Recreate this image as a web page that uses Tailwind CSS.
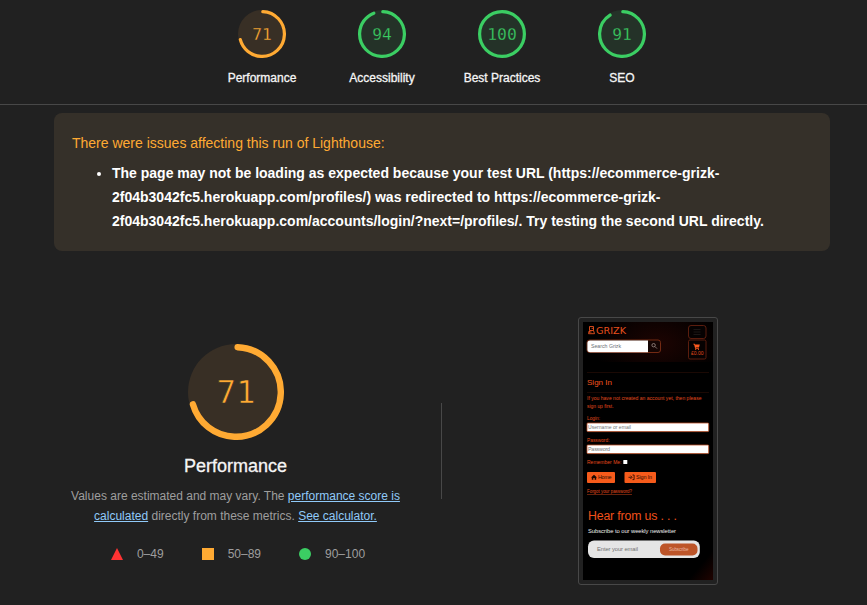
<!DOCTYPE html>
<html lang="en">
<head>
<meta charset="utf-8">
<title>Lighthouse Report</title>
<script src="https://cdn.jsdelivr.net/npm/@tailwindcss/browser@4"></script>
</head>
<body class="h-[605px] w-[867px] overflow-hidden bg-[#212121] font-['Liberation_Sans',Arial,sans-serif] text-[#f5f5f5]">
<header class="flex h-[105px] justify-center border-b border-[#484848] pt-[10px] pl-[17px]">
  <div class="flex w-[120px] flex-col items-center">
    <svg class="h-12 w-12" viewBox="0 0 120 120"><circle cx="60" cy="60" r="60" fill="#382f25"/><circle cx="60" cy="60" r="56" fill="none" stroke="#fa3" stroke-width="8" stroke-linecap="round" stroke-dasharray="245.8 352" transform="rotate(-87.9 60 60)"/><text x="35.5" y="75.5" textLength="49" lengthAdjust="spacingAndGlyphs" font-family="DejaVu Sans Mono, monospace" font-size="41" fill="#fa3" stroke="#382f25" stroke-width=".7">71</text></svg>
    <div class="mt-[12px] text-[12px] leading-[16px] [-webkit-text-stroke:0.3px_#f5f5f5]">Performance</div>
  </div>
  <div class="flex w-[120px] flex-col items-center">
    <svg class="h-12 w-12" viewBox="0 0 120 120"><circle cx="60" cy="60" r="60" fill="#243228"/><circle cx="60" cy="60" r="56" fill="none" stroke="#3bce63" stroke-width="8" stroke-linecap="round" stroke-dasharray="326.7 352" transform="rotate(-87.9 60 60)"/><text x="35.5" y="75.5" textLength="49" lengthAdjust="spacingAndGlyphs" font-family="DejaVu Sans Mono, monospace" font-size="41" fill="#3bce63" stroke="#243228" stroke-width=".7">94</text></svg>
    <div class="mt-[12px] text-[12px] leading-[16px] [-webkit-text-stroke:0.3px_#f5f5f5]">Accessibility</div>
  </div>
  <div class="flex w-[120px] flex-col items-center">
    <svg class="h-12 w-12" viewBox="0 0 120 120"><circle cx="60" cy="60" r="60" fill="#243228"/><circle cx="60" cy="60" r="56" fill="none" stroke="#3bce63" stroke-width="8"/><text x="23" y="75.5" textLength="74" lengthAdjust="spacingAndGlyphs" font-family="DejaVu Sans Mono, monospace" font-size="41" fill="#3bce63" stroke="#243228" stroke-width=".7">100</text></svg>
    <div class="mt-[12px] text-[12px] leading-[16px] [-webkit-text-stroke:0.3px_#f5f5f5]">Best Practices</div>
  </div>
  <div class="flex w-[120px] flex-col items-center">
    <svg class="h-12 w-12" viewBox="0 0 120 120"><circle cx="60" cy="60" r="60" fill="#243228"/><circle cx="60" cy="60" r="56" fill="none" stroke="#3bce63" stroke-width="8" stroke-linecap="round" stroke-dasharray="316.2 352" transform="rotate(-87.9 60 60)"/><text x="35.5" y="75.5" textLength="49" lengthAdjust="spacingAndGlyphs" font-family="DejaVu Sans Mono, monospace" font-size="41" fill="#3bce63" stroke="#243228" stroke-width=".7">91</text></svg>
    <div class="mt-[12px] text-[12px] leading-[16px] [-webkit-text-stroke:0.3px_#f5f5f5]">SEO</div>
  </div>
</header>

<section class="mt-2 ml-[54px] h-[138px] w-[776px] rounded-lg bg-[#353029] p-[18px] text-[14px] leading-6">
  <p class="text-[#fa3]">There were issues affecting this run of Lighthouse:</p>
  <ul class="mt-[6px] list-disc pl-10 font-bold text-white">
    <li>The page may not be loading as expected because your test URL (https://ecommerce-grizk-<br>2f04b3042fc5.herokuapp.com/profiles/) was redirected to https://ecommerce-grizk-<br>2f04b3042fc5.herokuapp.com/accounts/login/?next=/profiles/. Try testing the second URL directly.</li>
  </ul>
</section>

<main class="mt-[66px] ml-[30px] flex">
  <section class="flex w-[411px] flex-col items-center pt-[27px]">
    <svg class="h-24 w-24" viewBox="0 0 120 120"><circle cx="60" cy="60" r="60" fill="#382f25"/><circle cx="60" cy="60" r="56" fill="none" stroke="#fa3" stroke-width="8" stroke-linecap="round" stroke-dasharray="245.8 352" transform="rotate(-87.9 60 60)"/><text x="35.5" y="74" textLength="49" lengthAdjust="spacingAndGlyphs" font-family="DejaVu Sans Mono, monospace" font-size="39" fill="#fa3" stroke="#382f25" stroke-width=".8">71</text></svg>
    <h1 class="mt-[14px] text-[18px] leading-6 [-webkit-text-stroke:0.3px_#f5f5f5]">Performance</h1>
    <p class="mt-[8px] text-center text-[12px] leading-5 text-[#9e9e9e]">Values are estimated and may vary. The <a class="text-[#90caf9] underline">performance score is</a><br><a class="text-[#90caf9] underline">calculated</a> directly from these metrics. <a class="text-[#90caf9] underline">See calculator.</a></p>
    <div class="mt-[18px] flex items-center gap-[38px] pl-[5px] text-[12px] leading-5 text-[#9e9e9e]">
      <span class="flex items-center gap-[14px]"><svg class="h-3 w-3" viewBox="0 0 12 12"><path d="M6 0 12 12H0Z" fill="#f33"/></svg>0–49</span>
      <span class="flex items-center gap-[14px]"><span class="h-3 w-3 bg-[#fa3]"></span>50–89</span>
      <span class="flex items-center gap-[14px]"><span class="h-3 w-3 rounded-full bg-[#3bce63]"></span>90–100</span>
    </div>
  </section>
  <div class="mt-[86px] h-24 w-px bg-[#484848]"></div>
  <div class="ml-[136px] h-[268px] w-[140px] rounded-[3px] border border-[#484848] p-1">
    <svg class="h-[258px] w-[130px]" viewBox="0 0 130 258" font-family="Liberation Sans, Arial, sans-serif">
      <defs>
        <radialGradient id="glow"><stop offset="0" stop-color="#1d0402"/><stop offset="1" stop-color="#1d0402" stop-opacity="0"/></radialGradient>
        <linearGradient id="corner" x1="0" y1="0" x2="1" y2="1"><stop offset=".5" stop-color="#000"/><stop offset="1" stop-color="#200300"/></linearGradient>
      </defs>
      <rect width="130" height="258" fill="#000"/>
      <ellipse cx="75" cy="22" rx="65" ry="42" fill="url(#glow)"/>
      <rect y="40" width="130" height="26" fill="#000"/>
      <rect x="105" y="228" width="25" height="30" fill="url(#corner)"/>
      <g fill="none" stroke="#e8501e" stroke-width=".9"><path d="M6.5 4.5H10.5V8.5H6.5ZM7 8.5 5.5 11.7H11.5L10.5 8.5M5 10H8.5M8.5 6.3h2"/></g>
      <text x="13" y="11.8" textLength="30" lengthAdjust="spacingAndGlyphs" font-family="DejaVu Sans, sans-serif" font-size="9.4" fill="#e8501e">GRIZK</text>
      <rect x="4" y="18" width="73.5" height="12.5" rx="2.5" fill="#140503" stroke="#8c3518" stroke-width=".8"/>
      <path d="M7 18.4H65V30.2H7Q4.4 30.2 4.4 27.8V21Q4.4 18.4 7 18.4Z" fill="#fff"/>
      <text x="8" y="26" textLength="30" font-size="5.2" fill="#6b7077">Search Grizk</text>
      <g fill="none" stroke="#b0a09a" stroke-width=".7"><circle cx="70.6" cy="23.2" r="1.7"/><path d="m72 24.6 2 2"/></g>
      <g fill="#060202" stroke="#702412" stroke-width=".8"><rect x="105.5" y="3.5" width="17.5" height="13" rx="2.5"/><rect x="105.5" y="18" width="17.5" height="19" rx="1.5"/></g>
      <path d="M110.5 7.5h7M110.5 10h7M110.5 12.5h7" stroke="#25201e" stroke-width=".7"/>
      <path d="M110.3 21.8h1.5l.3.6h4.7l-.8 3.2h-3.3l.2.5h3v.7h-3.7l-1.1-4.3H110.3Z" fill="#ff5a1f"/><circle cx="112.7" cy="27.3" r=".6" fill="#ff5a1f"/><circle cx="115.5" cy="27.3" r=".6" fill="#ff5a1f"/>
      <text x="108" y="32.5" textLength="12.5" lengthAdjust="spacingAndGlyphs" font-size="5" fill="#e04a1c">£0.00</text>
      <path d="M4 50.5H126M4 70.5H126" stroke="#260d06" stroke-width=".7"/>
      <text x="4" y="62.7" textLength="25" font-size="8" fill="#f0541f">Sign In</text>
      <g font-size="5.2" fill="#e04a1c">
        <text x="4" y="78" textLength="114.5" lengthAdjust="spacingAndGlyphs">If you have not created an account yet, then please</text>
        <text x="4" y="85.5" textLength="26.5" lengthAdjust="spacingAndGlyphs">sign up first.</text>
        <text x="4" y="98" textLength="13" lengthAdjust="spacingAndGlyphs">Login:</text>
        <text x="4" y="120" textLength="22.5" lengthAdjust="spacingAndGlyphs">Password:</text>
        <text x="4" y="142" textLength="34.5" lengthAdjust="spacingAndGlyphs">Remember Me:</text>
        <text x="4" y="171" textLength="45" lengthAdjust="spacingAndGlyphs" font-size="4.6" text-decoration="underline">Forgot your password?</text>
      </g>
      <g fill="#fff" stroke="#b94c23" stroke-width=".8"><rect x="4" y="101" width="121.7" height="8.6" rx=".8"/><rect x="4" y="123" width="121.7" height="8.6" rx=".8"/></g>
      <g font-size="5.3" fill="#777"><text x="5" y="107" textLength="43" lengthAdjust="spacingAndGlyphs">Username or email</text><text x="5" y="129" textLength="22">Password</text></g>
      <rect x="40.3" y="138" width="4" height="4" rx=".5" fill="#fff"/>
      <rect x="4" y="150" width="28" height="11" rx="1" fill="#f65b1b"/><rect x="41.5" y="150" width="31.5" height="11" rx="1" fill="#f65b1b"/>
      <path d="m8 155.5 3-2.8 3 2.8h-.8v2.3h-1.5v-1.7h-1.4v1.7H8.8v-2.3Z" fill="#1d0800"/>
      <path d="M45.5 155.3h3M47.4 153.6l1.7 1.7-1.7 1.7M49.5 153h1.6v4.6h-1.6" fill="none" stroke="#1d0800" stroke-width=".8"/>
      <g font-size="5.4" fill="#2a0d02"><text x="15" y="157.2" textLength="13.5">Home</text><text x="53" y="157.2" textLength="16">Sign In</text></g>
      <text x="5" y="198" textLength="89" font-size="12.3" fill="#f0501a">Hear from us . . .</text>
      <text x="5" y="211" textLength="88" font-size="5.8" fill="#eee">Subscribe to our weekly newsletter</text>
      <rect x="5" y="218.5" width="111.8" height="17.5" rx="6" fill="#e5e5e5"/>
      <text x="14" y="229" textLength="41" font-size="5.8" fill="#707070">Enter your email</text>
      <rect x="77" y="221.5" width="37.5" height="12" rx="5" fill="#bd5529"/>
      <text x="86" y="229" textLength="19.5" font-size="4.6" fill="#e9b8a2">Subscribe</text>
    </svg>
  </div>
</main>
</body>
</html>
